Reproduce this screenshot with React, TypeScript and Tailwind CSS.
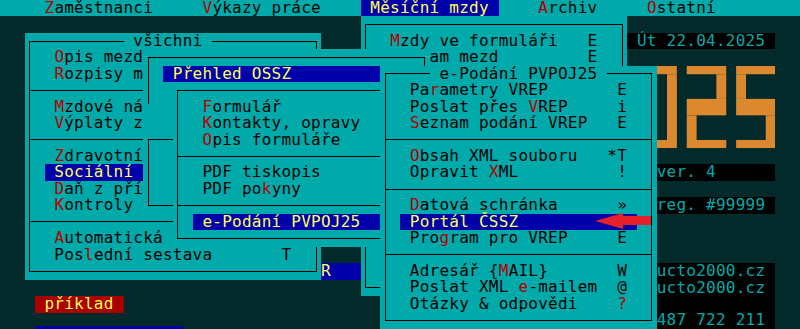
import type { ReactNode } from "react";

// DOS text screen: 9.875px columns, 16.45px rows, grid starts 5px in from the left.

function Row({ children }: { children?: ReactNode }) {
  return <div className="h-[16.45px] leading-[16.45px] whitespace-pre">{children}</div>;
}

function Hot({ children }: { children: ReactNode }) {
  return <span className="text-[#b40000]">{children}</span>;
}

function Bar({ children }: { children: ReactNode }) {
  return (
    <span className="inline-block h-[16.45px] bg-[#0000aa] align-top text-[#ffff55]">{children}</span>
  );
}

function Sep() {
  return (
    <div className="flex h-[16.45px] items-center px-[4.5px]">
      <div className="h-px flex-1 bg-black" />
    </div>
  );
}

function Title({ children }: { children: ReactNode }) {
  return <span className="inline-block h-[16.45px] bg-[#00aaaa] align-top">{children}</span>;
}

function Win({ className, frame = true, children }: { className: string; frame?: boolean; children: ReactNode }) {
  return (
    <div className={`absolute bg-[#00aaaa] text-black ${className}`}>
      {frame && <div className="absolute inset-x-[4.5px] inset-y-[7.7px] border border-black" />}
      <div className="relative">{children}</div>
    </div>
  );
}

const digits: Record<string, number[][]> = {
  // [col, halfRow, w, h]
  "2": [[0, 0, 4, 1], [3, 1, 1, 3], [0, 4, 4, 2], [0, 6, 1, 3], [0, 9, 4, 1]],
  "0": [[0, 0, 4, 1], [0, 1, 1, 8], [3, 1, 1, 8], [0, 9, 4, 1]],
  "5": [[0, 0, 4, 1], [0, 1, 1, 3], [0, 4, 4, 2], [3, 6, 1, 3], [0, 9, 4, 1]],
};

function Logo() {
  return (
    <svg width="187.6" height="82.25" viewBox="0 0 187.6 82.25" className="-ml-[39.5px] block">
      {["2", "0", "2", "5"].map((d, i) =>
        digits[d].map(([c, r, w, h], j) => (
          <rect
            key={`${i}-${j}`}
            x={i * 49.375 + c * 9.875}
            y={r * 8.225}
            width={w * 9.875}
            height={h * 8.225}
            fill="#db882f"
          />
        ))
      )}
    </svg>
  );
}

export default function App() {
  return (
    <div className="relative h-[329px] w-[800px] overflow-hidden bg-[#022a2a] font-['DejaVu_Sans_Mono',monospace] text-[16px] tracking-[0.242px] text-black">
      {/* menu bar */}
      <div className="h-[16.45px] bg-[#00aaaa] pl-[5px] leading-[16.45px] whitespace-pre">
        {"    "}<Hot>Z</Hot>aměstnanci{"     "}<Hot>V</Hot>ýkazy práce{"    "}
        <Bar> Měsíční mzdy </Bar>
        {"    "}<Hot>A</Hot>rchiv{"     "}<Hot>O</Hot>statní
      </div>

      {/* info panel on the desktop */}
      <div className="absolute left-[627.125px] top-[32.9px] flex w-[148.125px] flex-col text-[#00aaaa]">
        <div className="bg-black"><Row> Út 22.04.2025</Row></div>
        <Row />
        <Logo />
        <Row />
        <div className="bg-black"><Row>{"   ver. 4"}</Row></div>
        <Row />
        <div className="bg-black"><Row>{"   reg. #99999"}</Row></div>
        <Row />
        <Row />
        <Row />
        <div className="-ml-[39.5px] w-[187.625px] bg-black">
          <Row>{"   www.ucto2000.cz"}</Row>
          <Row>{"  info@ucto2000.cz"}</Row>
          <Row />
          <Row>{"  tel. 487 722 211"}</Row>
        </div>
      </div>

      <div className="absolute left-[34.625px] top-[296.1px] bg-[#aa0000] text-[#ffff55]">
        <Row> příklad </Row>
      </div>
      <div className="absolute left-[34.625px] top-[326px] h-[16px] w-[148px] bg-[#0000aa]" />
      <div className="absolute left-[321px] top-[263.2px] w-[79px] bg-[#0000aa] text-[#ffff55]">
        <Row>R</Row>
      </div>

      {/* všichni */}
      <Win className="left-[24.75px] top-[32.9px] h-[246.75px] w-[296.25px]">
        <Row>{"          "}<Title> všichni </Title></Row>
        <Row>{"   "}<Hot>O</Hot>pis mezd</Row>
        <Row>{"   "}<Hot>R</Hot>ozpisy mezd</Row>
        <Sep />
        <Row>{"   "}<Hot>M</Hot>zdové náklady</Row>
        <Row>{"   "}<Hot>V</Hot>ýplaty z účtu</Row>
        <Sep />
        <Row>{"   "}<Hot>Z</Hot>dravotní pojištění</Row>
        <Row>{"  "}<Bar>{" Sociální pojištění       "}</Bar></Row>
        <Row>{"   "}<Hot>D</Hot>aň z příjmů</Row>
        <Row>{"   "}<Hot>K</Hot>ontroly</Row>
        <Sep />
        <Row>{"   "}<Hot>A</Hot>utomatická</Row>
        <Row>{"   Pos"}<Hot>l</Hot>{"ední sestava       T"}</Row>
      </Win>

      {/* Měsíční mzdy */}
      <Win className="left-[360.5px] top-[16.45px] h-[279.65px] w-[266.625px]">
        <Row />
        <Row>{"   "}<Hot>M</Hot>{"zdy ve formuláři   E"}</Row>
        <Row>{"   "}<Hot>S</Hot>{"eznam mezd         E"}</Row>
      </Win>

      {/* Sociální */}
      <Win className="left-[143.25px] top-[49.35px] h-[164.5px] w-[286.375px]" frame={false}>
        <div className="absolute left-[4.5px] right-[4.5px] top-[7.7px] h-px bg-black" />
        <div className="absolute right-[4.5px] top-[7.7px] h-[149.1px] w-px bg-black" />
        <div className="absolute left-[4.5px] right-[4.5px] top-[155.8px] h-px bg-black" />
        <div className="absolute left-[4.5px] top-[7.7px] h-[47px] w-px bg-black" />
        <div className="absolute left-[4.5px] right-[4.5px] top-[89.95px] h-[66.8px] border-t border-l border-black" />
        <Row />
        <Row>{"  "}<Bar>{" Přehled OSSZ            "}</Bar></Row>
      </Win>

      {/* Přehled OSSZ */}
      <Win className="left-[172.875px] top-[82.25px] h-[164.5px] w-[246.875px]">
        <Row />
        <Row>{"   "}<Hot>F</Hot>ormulář</Row>
        <Row>{"   "}<Hot>K</Hot>ontakty, opravy</Row>
        <Row>{"   "}<Hot>O</Hot>pis formuláře</Row>
        <Sep />
        <Row>{"   PDF tiskopis"}</Row>
        <Row>{"   PDF po"}<Hot>k</Hot>yny</Row>
        <Sep />
        <Row>{"  "}<Bar>{" e-Podání PVPOJ25    "}</Bar></Row>
      </Win>

      {/* e-Podání PVPOJ25 */}
      <Win className="left-[380.25px] top-[65.8px] h-[263.2px] w-[276.5px]">
        <Row>{"     "}<Title> e-Podání PVPOJ25 </Title></Row>
        <Row>{"   Pa"}<Hot>r</Hot>{"ametry VREP       E"}</Row>
        <Row>{"   Poslat přes "}<Hot>V</Hot>{"REP     i"}</Row>
        <Row>{"   "}<Hot>S</Hot>{"eznam podání VREP   E"}</Row>
        <Sep />
        <Row>{"   "}<Hot>O</Hot>{"bsah XML souboru   *T"}</Row>
        <Row>{"   Opravit "}<Hot>X</Hot>{"ML          !"}</Row>
        <Sep />
        <Row>{"   "}<Hot>D</Hot>{"atová schránka      »"}</Row>
        <Row>{"  "}<Bar>{" Portál ČSSZ            "}</Bar></Row>
        <Row>{"   Pro"}<Hot>g</Hot>{"ram pro VREP     E"}</Row>
        <Sep />
        <Row>{"   Adresář {"}<Hot>M</Hot>{"AIL}       W"}</Row>
        <Row>{"   Poslat XML "}<Hot>e</Hot>{"-mailem  @"}</Row>
        <Row>{"   Otázky & odpovědi    "}<Hot>?</Hot></Row>
      </Win>

      {/* pointer arrow */}
      <svg className="absolute left-[594px] top-[210px]" width="58" height="22" viewBox="0 0 58 22">
        <polygon points="1,11 29,3 29,6 57,6 57,15 29,15 29,19" fill="#e8202a" />
      </svg>
    </div>
  );
}
